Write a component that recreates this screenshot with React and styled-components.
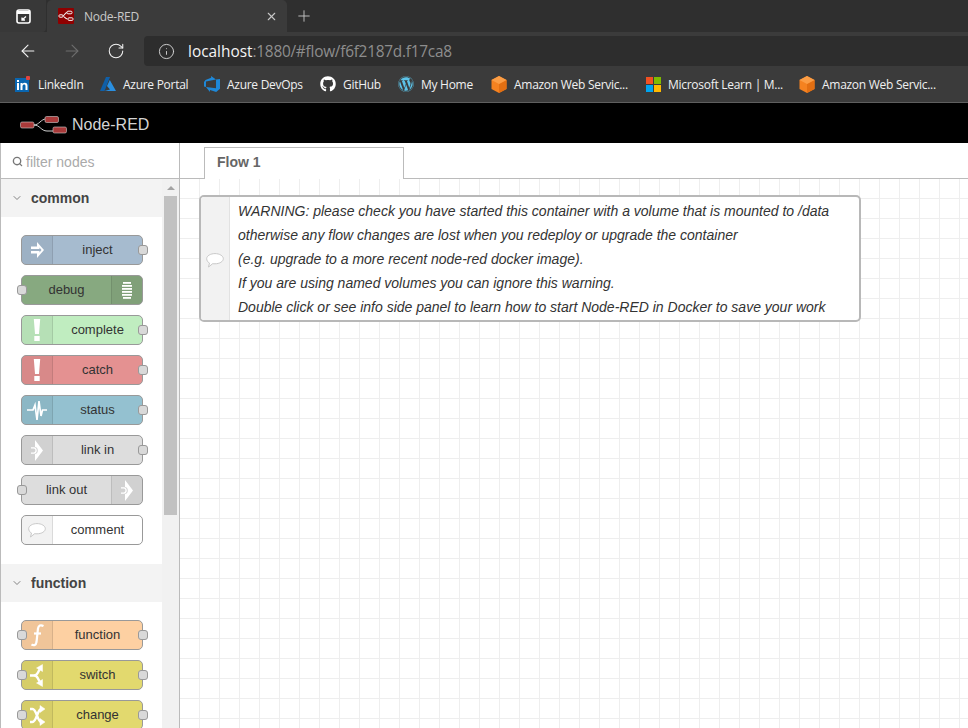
import React from 'react';
import styled, { createGlobalStyle } from 'styled-components';
import { ArrowLeft, ArrowRight, RotateCw, Info, X, Plus, ChevronDown, Search } from 'lucide-react';
import { FaGithub, FaWordpress } from 'react-icons/fa';

const GlobalStyle = createGlobalStyle`
  html, body {
    margin: 0;
    padding: 0;
    width: 968px;
    height: 728px;
    overflow: hidden;
    background: #fff;
    font-family: "Liberation Sans", Arial, sans-serif;
  }
`;

const Page = styled.div`
  width: 968px;
  height: 728px;
  display: flex;
  flex-direction: column;
  overflow: hidden;
`;

/* browser chrome */
const TabStrip = styled.div`
  height: 32px;
  flex: none;
  display: flex;
  align-items: stretch;
  background: #2f2f2f;
`;

const TabActions = styled.div`
  width: 46px;
  margin-right: 1px;
  display: flex;
  align-items: center;
  justify-content: center;
  background: #383838;
  border-bottom-right-radius: 4px;
`;

const BrowserTab = styled.div`
  width: 240px;
  display: flex;
  align-items: center;
  padding: 0 9px 0 11px;
  box-sizing: border-box;
  background: #3b3b3b;
  border-radius: 5px 5px 0 0;
  color: #c9c9c9;
  font: 12px "Open Sans", sans-serif;
  letter-spacing: -0.25px;
`;

const Favicon = styled.span`
  width: 16px;
  height: 16px;
  flex: none;
  margin-right: 10px;
  display: flex;
`;

const TabTitle = styled.span`
  flex: 1;
`;

const NewTab = styled.div`
  width: 34px;
  display: flex;
  align-items: center;
  justify-content: center;
  color: #c8c8c8;
`;

const Toolbar = styled.div`
  height: 34px;
  flex: none;
  display: flex;
  align-items: flex-end;
  background: #3b3b3b;
`;

const NavButton = styled.div`
  width: 44px;
  height: 30px;
  flex: none;
  display: flex;
  align-items: center;
  justify-content: center;
  color: ${(p) => (p.$dim ? '#6e6e6e' : '#f2f2f2')};
  margin-left: ${(p) => (p.$first ? '6px' : '0')};
`;

const UrlField = styled.div`
  flex: 1;
  height: 30px;
  margin-left: 6px;
  display: flex;
  align-items: center;
  padding-left: 14px;
  background: #2d2d2d;
  border-radius: 4px 0 0 4px;
  color: #d8d8d8;
`;

const UrlText = styled.div`
  margin-left: 13px;
  font: 15.4px "Open Sans", sans-serif;
  letter-spacing: -0.25px;
  color: #8d8d8d;
`;

const UrlHost = styled.span`
  color: #f4f4f4;
  letter-spacing: 0;
`;

const Bookmarks = styled.div`
  height: 37px;
  flex: none;
  display: flex;
  align-items: center;
  gap: 17px;
  padding-left: 15px;
  box-sizing: border-box;
  background: #3b3b3b;
  border-bottom: 1px solid #5f5f5f;
`;

const Bookmark = styled.div`
  display: flex;
  align-items: center;
  gap: 7px;
  color: #f0f0f0;
  font: 12px "Open Sans", sans-serif;
  letter-spacing: -0.28px;
  white-space: nowrap;
`;

const BookmarkIcon = styled.span`
  width: 16px;
  height: 16px;
  flex: none;
  display: flex;
  align-items: center;
  justify-content: center;
  color: ${(p) => p.$color || '#fff'};
`;

const BookmarkLabel = styled.span`
  display: block;
  width: ${(p) => p.$width}px;
`;

/* node-red */
const AppHeader = styled.header`
  height: 40px;
  flex: none;
  box-sizing: border-box;
  display: flex;
  align-items: center;
  padding: 4px 0 0 20px;
  background: #000;
  color: #d4d4d4;
  font-size: 16px;
`;

const HeaderTitle = styled.span`
  margin-left: 5px;
`;

const Workspace = styled.div`
  flex: 1;
  min-height: 0;
  display: flex;
`;

const Palette = styled.aside`
  width: 180px;
  flex: none;
  box-sizing: border-box;
  display: flex;
  flex-direction: column;
  border-left: 1px solid #bbb;
  border-right: 1px solid #bbb;
  background: #fff;
  overflow: hidden;
`;

const PaletteSearch = styled.div`
  height: 36px;
  flex: none;
  box-sizing: border-box;
  display: flex;
  align-items: center;
  gap: 3px;
  padding: 2px 0 0 11px;
  border-bottom: 1px solid #bbb;
  color: #aaa;
  font-size: 14px;
`;

const PaletteBody = styled.div`
  flex: 1;
  min-height: 0;
  display: flex;
`;

const Categories = styled.div`
  flex: 1;
  min-width: 0;
`;

const CategoryHeader = styled.div`
  height: 38px;
  display: flex;
  align-items: center;
  gap: 8px;
  padding-left: 10px;
  background: #f3f3f3;
  color: #444;
  font-size: 14px;
  font-weight: bold;
`;

const NodeList = styled.div`
  display: flex;
  flex-direction: column;
  gap: 10px;
  padding: 18px 0 19px 20px;
`;

const NodeBox = styled.div`
  position: relative;
  width: 122px;
  height: 30px;
  box-sizing: border-box;
  display: flex;
  flex-direction: ${(p) => (p.$iconRight ? 'row-reverse' : 'row')};
  background: ${(p) => p.$color};
  border: 1px solid #999;
  border-radius: 5px;
  color: #333;
  font-size: 13px;
`;

const NodeIcon = styled.div`
  width: 31px;
  flex: none;
  display: flex;
  align-items: center;
  justify-content: center;
  background: rgba(0, 0, 0, 0.05);
  border-${(p) => (p.$iconRight ? 'left' : 'right')}: 1px solid rgba(0, 0, 0, 0.1);
  border-radius: ${(p) => (p.$iconRight ? '0 4px 4px 0' : '4px 0 0 4px')};
  box-sizing: border-box;
`;

const NodeLabel = styled.div`
  flex: 1;
  display: flex;
  align-items: center;
  justify-content: center;
  padding-bottom: 1px;
`;

const Port = styled.span`
  position: absolute;
  top: 9px;
  ${(p) => (p.$side === 'left' ? 'left: -5px;' : 'right: -6px;')}
  width: 8px;
  height: 8px;
  background: #d9d9d9;
  border: 1px solid #999;
  border-radius: 3px;
`;

const ScrollTrack = styled.div`
  width: 17px;
  flex: none;
  display: flex;
  flex-direction: column;
  align-items: center;
  background: #f1f1f1;
`;

const ScrollArrow = styled.div`
  height: 17px;
  flex: none;
  display: flex;
  align-items: center;
  justify-content: center;
  &::before {
    content: '';
    border-left: 4px solid transparent;
    border-right: 4px solid transparent;
    border-bottom: 4px solid #a3a3a3;
  }
`;

const ScrollThumb = styled.div`
  width: 13px;
  height: 319px;
  flex: none;
  background: #c1c1c1;
`;

const Main = styled.main`
  flex: 1;
  min-width: 0;
  display: flex;
  flex-direction: column;
`;

const TabBar = styled.div`
  height: 36px;
  flex: none;
  box-sizing: border-box;
  display: flex;
  align-items: flex-end;
  padding-left: 24px;
  border-bottom: 1px solid #bbb;
`;

const FlowTab = styled.div`
  width: 200px;
  height: 32px;
  box-sizing: border-box;
  margin-bottom: -1px;
  padding: 6px 0 0 12px;
  background: #fff;
  border: 1px solid #bbb;
  border-bottom: none;
  color: #666;
  font-size: 14px;
  font-weight: bold;
`;

const Canvas = styled.div`
  position: relative;
  flex: 1;
  min-height: 0;
  background-color: #fff;
  background-image: linear-gradient(to right, #eee 1px, transparent 1px),
    linear-gradient(to bottom, #eee 1px, transparent 1px);
  background-size: 20px 20px;
  background-position: 19px 19px;
`;

const CommentNode = styled.div`
  position: absolute;
  left: 19px;
  top: 16px;
  width: 662px;
  height: 127px;
  box-sizing: border-box;
  display: flex;
  background: #fff;
  border: 2px solid #b8b8b8;
  border-radius: 5px;
`;

const CommentIcon = styled.div`
  width: 29px;
  flex: none;
  box-sizing: border-box;
  display: flex;
  align-items: center;
  justify-content: center;
  padding: 3px 1px 0 0;
  background: #f2f2f2;
  border-right: 1px solid #e2e2e2;
  border-radius: 3px 0 0 3px;
`;

const CommentText = styled.div`
  padding: 2px 0 0 8px;
  color: #333;
  font-size: 14px;
  font-style: italic;
  line-height: 24px;
  white-space: nowrap;
`;

const Glyph = styled.svg`
  display: block;
  flex: none;
`;

function InjectIcon() {
  return (
    <Glyph width="13" height="16" viewBox="0 0 13 16" fill="#fff" fillRule="evenodd">
      <path d="M0 4.500h6V0l7 8-7 8v-4.500H0zM0 7v2h8.500v1.500L10.500 8 8.500 5.500V7z" />
    </Glyph>
  );
}

function DebugIcon() {
  return (
    <Glyph width="10" height="17" viewBox="0 0 10 17" fill="#fff">
      {[0, 3, 6, 9, 12, 15].map((y, i) => (
        <rect key={y} x={i === 0 || i === 5 ? 1 : 0} y={y} width={i === 0 || i === 5 ? 8 : 10} height="1.8" />
      ))}
    </Glyph>
  );
}

function AlertIcon() {
  return (
    <Glyph width="8" height="22" viewBox="0 0 8 22" fill="#fff">
      <path d="M.8 0h6.400L6 15H2zM1.300 17h5.400v5H1.300z" />
    </Glyph>
  );
}

function StatusIcon() {
  return (
    <Glyph width="20" height="22" viewBox="0 0 20 22" fill="none" stroke="#fff" strokeWidth="1.700">
      <path d="M0 11h6l2-5 2 15 2-19 2 15 1.500-6H20" />
    </Glyph>
  );
}

function LinkIcon() {
  return (
    <Glyph width="12" height="21" viewBox="0 0 12 21" fill="#fff">
      <path d="M4 0l8 10.500L4 21v-7c1.700 0 2.800-1.400 2.800-3.500S5.700 7 4 7z" />
      <path d="M0 7.300h3c1.700 0 2.800 1.300 2.800 3.200S4.700 13.700 3 13.700H0v-1.300h2.800c1 0 1.600-.8 1.600-1.900s-.6-1.900-1.600-1.900H0z" />
    </Glyph>
  );
}

function BubbleIcon() {
  return (
    <Glyph width="18" height="15" viewBox="0 0 18 15" fill="#fff" stroke="#c8c8c8" strokeWidth="1">
      <path d="M9 .6c4.500 0 8.300 2.200 8.300 5.100S13.500 10.800 9 10.800c-.8 0-1.500 0-2.200-.2L2.500 14l1-3.900C1.800 9.200.7 7.600.7 5.700.7 2.800 4.500.6 9 .6z" />
    </Glyph>
  );
}

function FunctionIcon() {
  return (
    <Glyph width="13" height="23" viewBox="0 0 13 23" fill="none" stroke="#fff" strokeWidth="2.200">
      <path d="M12.500 2c-3-1.500-5-.5-5.500 2.500L5.500 18c-.5 3-2.500 4-5 2.500" />
      <path d="M3 9.500h7" />
    </Glyph>
  );
}

function SwitchIcon() {
  return (
    <Glyph width="14" height="23" viewBox="0 0 14 23" fill="#fff" stroke="#fff">
      <path d="M0 11.500h4c2 0 3-1 4-3l1.500-3M4 11.500c2 0 3 1 4 3l1.500 3" fill="none" strokeWidth="2.400" />
      <path d="M6.500 4l6-3.500v7zM6.500 19l6 3.500v-7z" strokeWidth="0.500" />
    </Glyph>
  );
}

function ChangeIcon() {
  return (
    <Glyph width="15" height="23" viewBox="0 0 15 23" fill="#fff" stroke="#fff">
      <path d="M0 5h2.500c2 0 3 2.500 4.500 6.500S9.500 18 11 18M0 18h2.500c2 0 3-2.500 4.500-6.500S9.500 5 11 5" fill="none" strokeWidth="2.400" />
      <path d="M10 1.500l5 3.500-5 3.500zM10 14.500l5 3.500-5 3.500z" strokeWidth="0.500" />
    </Glyph>
  );
}

function WindowIcon() {
  return (
    <Glyph width="15" height="15" viewBox="0 0 15 15" fill="none" stroke="#fff">
      <rect x="1" y="1" width="13" height="13" rx="2" strokeWidth="1.600" />
      <path d="M1 3.500h13" strokeWidth="3" />
      <path d="M10 7.500l-3.500 3M6 8.500V11h3" strokeWidth="1.300" />
    </Glyph>
  );
}

function RedFavicon() {
  return (
    <Glyph width="16" height="16" viewBox="0 0 16 16" fill="none">
      <rect width="16" height="16" rx="1" fill="#8f0000" />
      <path d="M4.500 8c2 0 2.500-3.500 4.500-3.500M4.500 8c2 0 2.500 3 5 3" stroke="#f2f2f2" strokeWidth="1.100" />
      <rect x="1" y="6.800" width="4" height="2.400" rx="0.800" stroke="#f2f2f2" strokeWidth="1" />
      <rect x="9" y="3.200" width="5" height="2.600" rx="1" stroke="#f2f2f2" strokeWidth="1" />
      <rect x="10" y="9.800" width="5" height="2.600" rx="1" stroke="#f2f2f2" strokeWidth="1" />
    </Glyph>
  );
}

function NodeRedLogo() {
  return (
    <Glyph width="47" height="18" viewBox="0 0 47 18" fill="none">
      <path d="M14 9c5 0 7-6 12-6h3M14 9c6 0 7 6 13 6h10" stroke="#d0d0d0" strokeWidth="1" />
      <rect x="0.500" y="6" width="13.500" height="6" rx="1.500" fill="#a93a3a" stroke="#d0d0d0" strokeWidth="0.600" />
      <rect x="25" y="0.500" width="13.500" height="6" rx="1.500" fill="#a93a3a" stroke="#d0d0d0" strokeWidth="0.600" />
      <rect x="33" y="11" width="13.500" height="6" rx="1.500" fill="#a93a3a" stroke="#d0d0d0" strokeWidth="0.600" />
    </Glyph>
  );
}

function LinkedInIcon() {
  return (
    <Glyph width="16" height="16" viewBox="0 0 16 16">
      <rect x="0" y="2" width="14" height="14" fill="#0a66b0" />
      <rect x="11" y="0" width="4" height="4" rx="1" fill="#e0443e" />
      <path d="M2 7h2v7H2zM2 4h2v2H2zM5.500 7h2v1c.5-.8 1.300-1.200 2.300-1.200 1.800 0 2.700 1.100 2.700 3V14h-2v-3.800c0-1-.4-1.600-1.300-1.600s-1.700.6-1.700 1.700V14h-2z" fill="#fff" />
    </Glyph>
  );
}

function AzureIcon() {
  return (
    <Glyph width="16" height="14" viewBox="0 0 16 14">
      <path d="M6 0h4L4.500 14H0z" fill="#0f5fa8" />
      <path d="M9.800 3L16 14H4.500l5.500-1.600-3-3.400z" fill="#2a8fe0" />
    </Glyph>
  );
}

function DevOpsIcon() {
  return (
    <Glyph width="16" height="16" viewBox="0 0 24 24" fill="#1e88d8">
      <path d="M0 8.877L2.247 5.910l8.405-3.416V.022l7.370 5.393L2.966 8.338v8.225L0 15.707zm24-4.450v14.651l-5.753 4.900-9.303-3.057v3.056l-5.978-7.416 15.057 1.798V5.415z" />
    </Glyph>
  );
}

function CubeIcon() {
  return (
    <Glyph width="16" height="17" viewBox="0 0 16 17">
      <path d="M8 0l7.500 4v9L8 17 .5 13V4z" fill="#f58220" />
      <path d="M8 8l7.500-4v9L8 17z" fill="#e36f12" />
      <path d="M8 0l7.500 4L8 8 .5 4z" fill="#fb9d45" />
    </Glyph>
  );
}

function MicrosoftIcon() {
  return (
    <Glyph width="15" height="15" viewBox="0 0 15 15">
      <rect width="7" height="7" fill="#f25022" />
      <rect x="8" width="7" height="7" fill="#7fba00" />
      <rect y="8" width="7" height="7" fill="#00a4ef" />
      <rect x="8" y="8" width="7" height="7" fill="#ffb900" />
    </Glyph>
  );
}

const bookmarks = [
  { label: 'LinkedIn', width: 45, icon: <LinkedInIcon /> },
  { label: 'Azure Portal', width: 64, icon: <AzureIcon /> },
  { label: 'Azure DevOps', width: 76, icon: <DevOpsIcon /> },
  { label: 'GitHub', width: 38, icon: <FaGithub size={16} /> },
  { label: 'My Home', width: 53, icon: <FaWordpress size={16} />, color: '#5cc3e8' },
  { label: 'Amazon Web Servic...', width: 114, icon: <CubeIcon /> },
  { label: 'Microsoft Learn | M...', width: 114, icon: <MicrosoftIcon /> },
  { label: 'Amazon Web Servic...', width: 114, icon: <CubeIcon /> },
];

const categories = [
  {
    name: 'common',
    nodes: [
      { label: 'inject', color: '#a6bbcf', icon: <InjectIcon />, out: true },
      { label: 'debug', color: '#87a980', icon: <DebugIcon />, in: true, iconRight: true },
      { label: 'complete', color: '#c0edc0', icon: <AlertIcon />, out: true },
      { label: 'catch', color: '#e49191', icon: <AlertIcon />, out: true },
      { label: 'status', color: '#94c1d0', icon: <StatusIcon />, out: true },
      { label: 'link in', color: '#dddddd', icon: <LinkIcon />, out: true },
      { label: 'link out', color: '#dddddd', icon: <LinkIcon />, in: true, iconRight: true },
      { label: 'comment', color: '#ffffff', icon: <BubbleIcon /> },
    ],
  },
  {
    name: 'function',
    nodes: [
      { label: 'function', color: '#fdd0a2', icon: <FunctionIcon />, in: true, out: true },
      { label: 'switch', color: '#e2d96e', icon: <SwitchIcon />, in: true, out: true },
      { label: 'change', color: '#e2d96e', icon: <ChangeIcon />, in: true, out: true },
    ],
  },
];

const warning = [
  'WARNING: please check you have started this container with a volume that is mounted to /data',
  'otherwise any flow changes are lost when you redeploy or upgrade the container',
  '(e.g. upgrade to a more recent node-red docker image).',
  'If you are using named volumes you can ignore this warning.',
  'Double click or see info side panel to learn how to start Node-RED in Docker to save your work',
];

function PaletteNode({ node }) {
  return (
    <NodeBox $color={node.color} $iconRight={node.iconRight}>
      <NodeIcon $iconRight={node.iconRight}>{node.icon}</NodeIcon>
      <NodeLabel>{node.label}</NodeLabel>
      {node.in && <Port $side="left" />}
      {node.out && <Port $side="right" />}
    </NodeBox>
  );
}

export default function App() {
  return (
    <Page>
      <GlobalStyle />
      <TabStrip>
        <TabActions>
          <WindowIcon />
        </TabActions>
        <BrowserTab>
          <Favicon>
            <RedFavicon />
          </Favicon>
          <TabTitle>Node-RED</TabTitle>
          <X size={13} color="#c8c8c8" />
        </BrowserTab>
        <NewTab>
          <Plus size={18} strokeWidth={1.2} />
        </NewTab>
      </TabStrip>
      <Toolbar>
        <NavButton $first>
          <ArrowLeft size={20} strokeWidth={1.3} />
        </NavButton>
        <NavButton $dim>
          <ArrowRight size={20} strokeWidth={1.3} />
        </NavButton>
        <NavButton>
          <RotateCw size={18} strokeWidth={1.4} />
        </NavButton>
        <UrlField>
          <Info size={17} strokeWidth={1.3} />
          <UrlText>
            <UrlHost>localhost</UrlHost>:1880/#flow/f6f2187d.f17ca8
          </UrlText>
        </UrlField>
      </Toolbar>
      <Bookmarks>
        {bookmarks.map((b, i) => (
          <Bookmark key={i}>
            <BookmarkIcon $color={b.color}>{b.icon}</BookmarkIcon>
            <BookmarkLabel $width={b.width}>{b.label}</BookmarkLabel>
          </Bookmark>
        ))}
      </Bookmarks>
      <AppHeader>
        <NodeRedLogo />
        <HeaderTitle>Node-RED</HeaderTitle>
      </AppHeader>
      <Workspace>
        <Palette>
          <PaletteSearch>
            <Search size={11} strokeWidth={3} color="#777" />
            filter nodes
          </PaletteSearch>
          <PaletteBody>
            <Categories>
              {categories.map((cat) => (
                <section key={cat.name}>
                  <CategoryHeader>
                    <ChevronDown size={12} strokeWidth={1.6} color="#666" />
                    {cat.name}
                  </CategoryHeader>
                  <NodeList>
                    {cat.nodes.map((node) => (
                      <PaletteNode key={node.label} node={node} />
                    ))}
                  </NodeList>
                </section>
              ))}
            </Categories>
            <ScrollTrack>
              <ScrollArrow />
              <ScrollThumb />
            </ScrollTrack>
          </PaletteBody>
        </Palette>
        <Main>
          <TabBar>
            <FlowTab>Flow 1</FlowTab>
          </TabBar>
          <Canvas>
            <CommentNode>
              <CommentIcon>
                <BubbleIcon />
              </CommentIcon>
              <CommentText>
                {warning.map((line) => (
                  <div key={line}>{line}</div>
                ))}
              </CommentText>
            </CommentNode>
          </Canvas>
        </Main>
      </Workspace>
    </Page>
  );
}
